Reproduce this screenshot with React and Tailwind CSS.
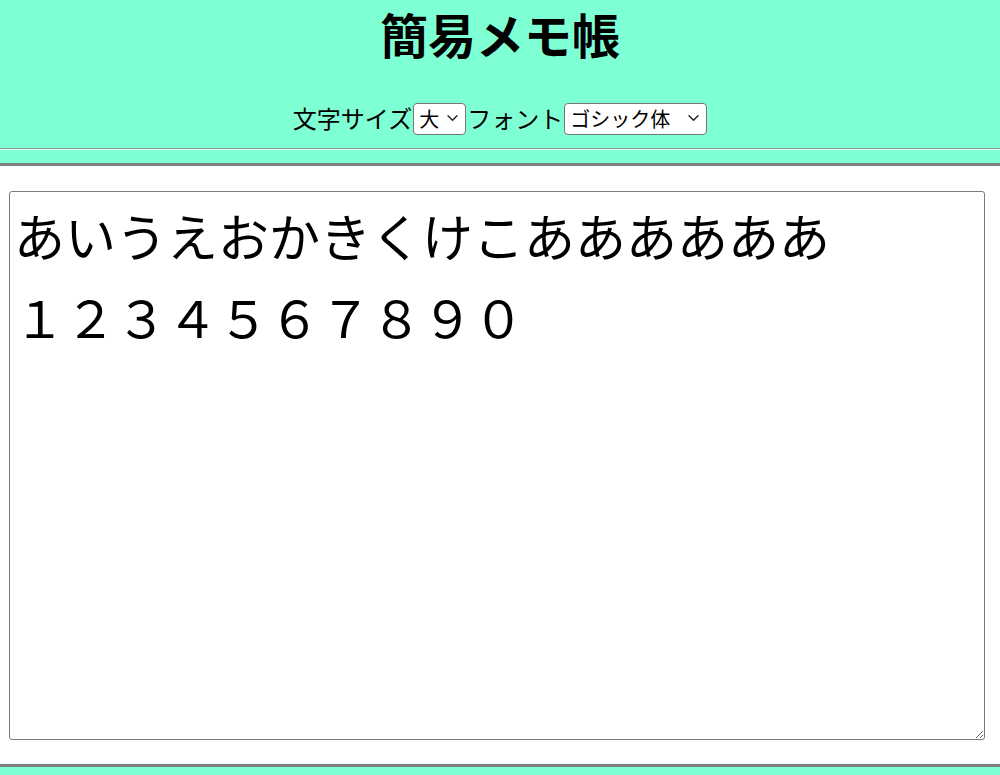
import React from "react";

function Chevron() {
  return (
    <svg
      className="pointer-events-none absolute right-[8px] top-1/2 -translate-y-1/2"
      width="11"
      height="7"
      viewBox="0 0 11 7"
      fill="none"
    >
      <path d="M1 1.2 L5.5 5.7 L10 1.2" stroke="#222" strokeWidth="1.4" strokeLinecap="round" strokeLinejoin="round" />
    </svg>
  );
}

export default function App() {
  const font = { fontFamily: '"Noto Sans CJK JP", "Noto Sans", sans-serif' };
  return (
    <div className="w-[1000px] h-[775px] overflow-hidden bg-white text-black" style={font}>
      <header className="bg-[#7fffd4] flex flex-col border-b-[3px] border-[#808080] pb-[13px]">
        <h1 className="m-0 h-[72px] pt-[1px] leading-[64px] text-[48px] font-bold text-center">簡易メモ帳</h1>
        <div className="mt-[30px] h-[32px] flex items-center justify-center gap-[1px] text-[24px] leading-[32px]">
          <span>文字サイズ</span>
          <div className="relative">
            <select
              defaultValue="大"
              className="appearance-none w-[53px] h-[32px] bg-white border-[1.5px] border-[#767676] rounded-[4px] pl-[5px] text-[20px] leading-[28px] text-black outline-none"
              style={font}
            >
              <option>小</option>
              <option>中</option>
              <option>大</option>
            </select>
            <Chevron />
          </div>
          <span>フォント</span>
          <div className="relative">
            <select
              defaultValue="ゴシック体"
              className="appearance-none w-[143px] h-[32px] bg-white border-[1.5px] border-[#767676] rounded-[4px] pl-[5px] text-[20px] leading-[28px] text-black outline-none"
              style={font}
            >
              <option>ゴシック体</option>
              <option>明朝体</option>
            </select>
            <Chevron />
          </div>
        </div>
        <div className="mt-[14px] border-t border-t-[#8c9a95] border-b border-b-[#e6fff6]" />
      </header>
      <main className="pt-[25px] pb-[24px] px-[9px]">
        <textarea
          className="block w-[976px] h-[549px] border-[1.5px] border-[#7a7a7a] rounded-[3px] pt-[3px] px-[4px] text-[51px] leading-[81px] text-black outline-none resize"
          style={font}
          defaultValue={"あいうえおかきくけこああああああ\n１２３４５６７８９０"}
        />
      </main>
      <footer className="bg-[#7fffd4] border-t-[3px] border-[#808080] h-[40px]" />
    </div>
  );
}
